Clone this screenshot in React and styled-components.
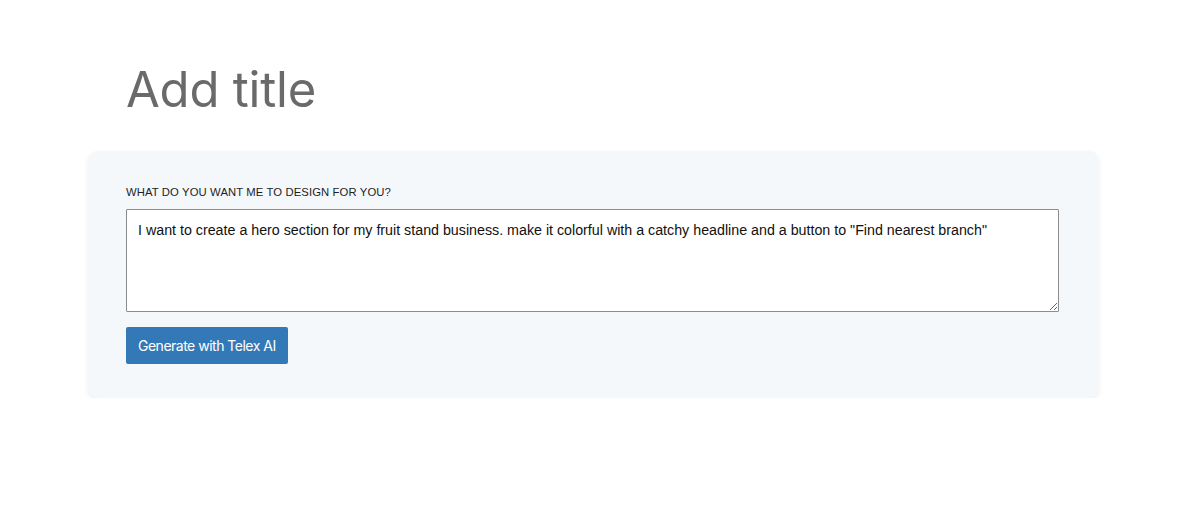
import React, { useState } from "react";
import styled, { createGlobalStyle } from "styled-components";

const GlobalStyle = createGlobalStyle`
  body {
    margin: 0;
    background: #ffffff;
    font-family: "Inter", "Liberation Sans", sans-serif;
  }
`;

const Page = styled.div`
  padding: 59px 0 0 88px;
`;

const Title = styled.h1`
  margin: 0 0 30px 38px;
  font-family: "Inter", sans-serif;
  font-weight: 400;
  font-size: 49px;
  line-height: 62px;
  letter-spacing: -0.2px;
  color: #6a6a6a;
`;

const Card = styled.div`
  width: 1011px;
  box-sizing: border-box;
  padding: 33px 40px 34px 38px;
  background: #f4f8fb;
  border-radius: 10px;
  box-shadow: 0 2px 5px rgba(0, 0, 0, 0.07);
  display: flex;
  flex-direction: column;
  align-items: flex-start;
`;

const Label = styled.label`
  font-family: "Liberation Sans", Arial, sans-serif;
  font-size: 11.3px;
  line-height: 16px;
  letter-spacing: 0.1px;
  color: #1e1e1e;
  text-transform: uppercase;
  margin-bottom: 9px;
`;

const Prompt = styled.textarea`
  width: 100%;
  height: 103px;
  box-sizing: border-box;
  padding: 11px 11px 10px;
  border: 1px solid #8c8c8c;
  border-radius: 1px;
  background: #fff;
  font-family: "Liberation Sans", Arial, sans-serif;
  font-size: 14.25px;
  line-height: 19px;
  color: #111;
  resize: vertical;
  margin: 0 0 15px;
  outline: none;
`;

const GenerateButton = styled.button`
  height: 37px;
  padding: 0 12px;
  border: none;
  border-radius: 2px;
  background: #3379b7;
  color: #fff;
  font-family: "Inter", sans-serif;
  font-size: 14px;
  letter-spacing: -0.5px;
  cursor: pointer;
`;

export default function App() {
  const [prompt, setPrompt] = useState(
    'I want to create a hero section for my fruit stand business. make it colorful with a catchy headline and a button to "Find nearest branch"'
  );
  return (
    <Page>
      <GlobalStyle />
      <Title>Add title</Title>
      <Card>
        <Label htmlFor="prompt">What do you want me to design for you?</Label>
        <Prompt id="prompt" value={prompt} onChange={(e) => setPrompt(e.target.value)} />
        <GenerateButton>Generate with Telex AI</GenerateButton>
      </Card>
    </Page>
  );
}
